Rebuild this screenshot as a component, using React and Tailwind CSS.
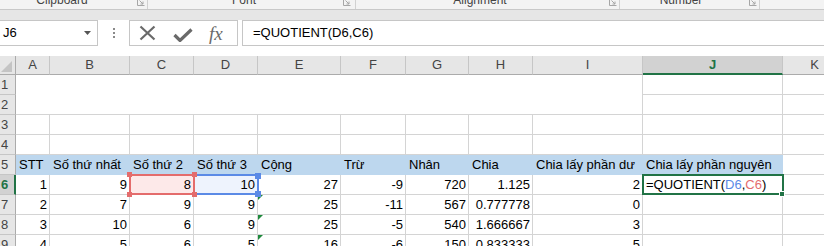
import { Fragment } from "react";

const cols = [
  { key: "A", w: "w-[34px]" },
  { key: "B", w: "w-[80px]" },
  { key: "C", w: "w-[64px]" },
  { key: "D", w: "w-[64px]" },
  { key: "E", w: "w-[83px]" },
  { key: "F", w: "w-[65px]" },
  { key: "G", w: "w-[63px]" },
  { key: "H", w: "w-[64px]" },
  { key: "I", w: "w-[110px]" },
  { key: "J", w: "w-[140px]" },
  { key: "K", w: "w-[64px]" },
];

const headers = ["STT", "Số thứ nhất", "Số thứ 2", "Số thứ 3", "Cộng", "Trừ", "Nhân", "Chia", "Chia lấy phần dư", "Chia lấy phần nguyên"];

const data = [
  [1, 9, 8, 10, 27, -9, 720, "1.125", 2],
  [2, 7, 9, 9, 25, -11, 567, "0.777778", 0],
  [3, 10, 6, 9, 25, -5, 540, "1.666667", 3],
  [4, 5, 6, 5, 16, -6, 150, "0.833333", 5],
];

function Launcher() {
  return (
    <svg width="8" height="8" viewBox="0 0 8 8" className="mt-[-2px]">
      <path d="M0.5 0.5V7.5H7.5" fill="none" stroke="#a6a6a6" strokeWidth="1" />
      <path d="M2.5 2.5L6 6M6 3.5V6H3.5" fill="none" stroke="#a6a6a6" strokeWidth="1" />
    </svg>
  );
}

function RibbonGroup({ label, width, textWidth, gap }) {
  return (
    <div className={`flex h-full items-start border-r border-[#d1d1d1] ${width}`}>
      <span className={`mt-[-6px] text-center text-[12px] leading-[12px] text-[#444] ${textWidth}`}>{label}</span>
      <div className={gap}>
        <Launcher />
      </div>
    </div>
  );
}

function ErrorMark() {
  return (
    <svg width="5" height="5" viewBox="0 0 5 5" className="absolute left-0 top-0">
      <polygon points="0,0 5,0 0,5" fill="#1e8a3c" />
    </svg>
  );
}

function Handle({ pos, color, size = "w-[5px] h-[5px]" }) {
  return <div className={`absolute ${pos} ${size} ${color}`} />;
}

export default function App() {
  const cell = "relative border-r border-b border-[#d4d4d4] px-[2px] leading-[19px] whitespace-nowrap";

  return (
    <div className="w-[824px] h-[246px] overflow-hidden bg-white text-[13px] text-black font-['Liberation_Sans',Arial,sans-serif]">
      {/* ribbon group labels, cut off at the top */}
      <div className="flex h-[10px] overflow-hidden border-b border-[#c8c8c8] bg-[#f3f3f3]">
        <RibbonGroup label="Clipboard" width="w-[148px]" textWidth="w-[124px]" gap="ml-[13px]" />
        <RibbonGroup label="Font" width="w-[208px]" textWidth="w-[192px]" gap="ml-[3px]" />
        <RibbonGroup label="Alignment" width="w-[264px]" textWidth="w-[248px]" gap="ml-[5px]" />
        <RibbonGroup label="Number" width="w-[140px]" textWidth="w-[122px]" gap="ml-[7px]" />
      </div>
      <div className="h-[10px] bg-[#e6e6e6]" />

      {/* formula bar */}
      <div className="flex h-[26px] items-stretch bg-white">
        <div className="flex w-[98px] items-center justify-between border border-l-0 border-[#c6c6c6] pl-[3px] pr-[6px] text-[13px]">
          <span>J6</span>
          <svg width="7" height="4" viewBox="0 0 7 4">
            <polygon points="0,0 7,0 3.5,4" fill="#555" />
          </svg>
        </div>
        <div className="flex w-[31px] flex-col items-center justify-center gap-[2px]">
          <span className="h-[2px] w-[2px] bg-[#8a8a8a]" />
          <span className="h-[2px] w-[2px] bg-[#8a8a8a]" />
          <span className="h-[2px] w-[2px] bg-[#8a8a8a]" />
        </div>
        <div className="flex w-[109px] items-center border border-[#c6c6c6] pl-[9px]">
          <svg width="17" height="16" viewBox="0 0 17 16">
            <path d="M1.5 1.5L15.5 14.5M15.5 1.5L1.5 14.5" stroke="#6a6a6a" strokeWidth="2.2" fill="none" />
          </svg>
          <svg width="20" height="14" viewBox="0 0 20 14" className="ml-[17px] mt-[3px]">
            <path d="M1.5 7L7 12.5L18.5 1.5" stroke="#6a6a6a" strokeWidth="3.2" fill="none" />
          </svg>
          <span className="ml-[16px] mt-[1px] font-['Liberation_Serif',serif] text-[19px] italic leading-none text-[#6a6a6a]">
            fx
          </span>
        </div>
        <div className="ml-[4px] flex flex-1 items-center border border-r-0 border-[#c6c6c6] pl-[10px] text-[13px]">
          =QUOTIENT(D6,C6)
        </div>
      </div>
      <div className="h-[10px] bg-white" />

      {/* sheet */}
      <div className="grid w-[847px] grid-cols-[16px_34px_80px_64px_64px_83px_65px_63px_64px_110px_140px_64px] grid-rows-[19px_repeat(9,20px)]">
        {/* column headers */}
        <div className="relative border-r border-b border-[#ababab] bg-[#e6e6e6]">
          <svg width="11" height="11" viewBox="0 0 11 11" className="absolute bottom-[2px] right-[3px]">
            <polygon points="11,0 11,11 0,11" fill="#c4c4c4" />
          </svg>
        </div>
        {cols.map((c) =>
          c.key === "J" ? (
            <div
              key={c.key}
              className="flex items-center justify-center border-r border-b-2 border-r-[#c6c6c6] border-b-[#217346] bg-[#d2d2d2] text-[13px] font-bold text-[#217346]"
            >
              {c.key}
            </div>
          ) : (
            <div
              key={c.key}
              className="flex items-center justify-center border-r border-b border-r-[#c6c6c6] border-b-[#ababab] bg-[#e6e6e6] text-[13px] text-[#444]"
            >
              {c.key}
            </div>
          )
        )}

        {/* rows 1-4 */}
        {[1, 2, 3, 4].map((r) => (
          <Fragment key={r}>
            <div className="border-r border-b border-r-[#ababab] border-b-[#c6c6c6] bg-[#e6e6e6] pl-[1px] leading-[19px] text-[#444]">
              {r}
            </div>
            {r === 1 && <div className="col-span-9 row-span-2 border-r border-b border-[#d4d4d4]" />}
            {r > 2 && cols.slice(0, 9).map((c) => <div key={c.key} className={cell} />)}
            <div className={cell} />
            <div className={cell} />
          </Fragment>
        ))}

        {/* row 5 */}
        <div className="border-r border-b border-r-[#ababab] border-b-[#c6c6c6] bg-[#e6e6e6] pl-[1px] leading-[19px] text-[#444]">5</div>
        {headers.map((h) => (
          <div key={h} className="border-b border-[#bdd7ee] bg-[#bdd7ee] pl-[3px] leading-[19px] whitespace-nowrap">
            {h}
          </div>
        ))}
        <div className={cell} />

        {/* rows 6-9 */}
        {data.map((row, i) => {
          const r = i + 6;
          const active = r === 6;
          return (
            <Fragment key={r}>
              {active ? (
                <div className="border-r-2 border-b border-r-[#217346] border-b-[#c6c6c6] bg-[#d2d2d2] pl-[1px] font-bold leading-[19px] text-[#217346]">
                  {r}
                </div>
              ) : (
                <div className="border-r border-b border-r-[#ababab] border-b-[#c6c6c6] bg-[#e6e6e6] pl-[1px] leading-[19px] text-[#444]">
                  {r}
                </div>
              )}
              {row.map((v, j) => {
                if (active && j === 2) {
                  return (
                    <div key={j} className={`${cell} z-20 bg-[#fde9e9] text-right`}>
                      {v}
                      <div className="pointer-events-none absolute -left-[1px] -top-[1px] h-[21px] w-[66px] border-2 border-[#e46c6c]" />
                      <Handle pos="-left-[3px] -top-[3px]" color="bg-[#e46c6c]" />
                      <Handle pos="-right-[4px] -top-[3px]" color="bg-[#e46c6c]" />
                      <Handle pos="-left-[3px] -bottom-[3px]" color="bg-[#e46c6c]" />
                      <Handle pos="-right-[4px] -bottom-[3px]" color="bg-[#e46c6c]" />
                    </div>
                  );
                }
                if (active && j === 3) {
                  return (
                    <div key={j} className={`${cell} z-10 bg-[#eef3fd] text-right`}>
                      {v}
                      <div className="pointer-events-none absolute -left-[1px] -top-[1px] h-[21px] w-[66px] border-2 border-[#5b8ae6]" />
                      <Handle pos="-right-[4px] -top-[2px]" color="bg-[#5b8ae6]" size="w-[6px] h-[6px]" />
                      <Handle pos="-right-[4px] -bottom-[3px]" color="bg-[#5b8ae6]" size="w-[6px] h-[6px]" />
                    </div>
                  );
                }
                return (
                  <div key={j} className={`${cell} text-right`}>
                    {j === 4 && r > 6 && <ErrorMark />}
                    {v}
                  </div>
                );
              })}
              {active ? (
                <div className={`${cell} z-10 pl-[3px]`}>
                  =QUOTIENT(<span className="text-[#5b8ae6]">D6</span>,<span className="text-[#e46c6c]">C6</span>)
                  <div className="pointer-events-none absolute -left-[1px] -top-[1px] h-[21px] w-[142px] border-2 border-[#217346]" />
                  <div className="absolute -bottom-[3px] -right-[3px] h-[6px] w-[6px] border border-white bg-[#217346]" />
                </div>
              ) : (
                <div className={cell} />
              )}
              <div className={cell} />
            </Fragment>
          );
        })}
      </div>
    </div>
  );
}
